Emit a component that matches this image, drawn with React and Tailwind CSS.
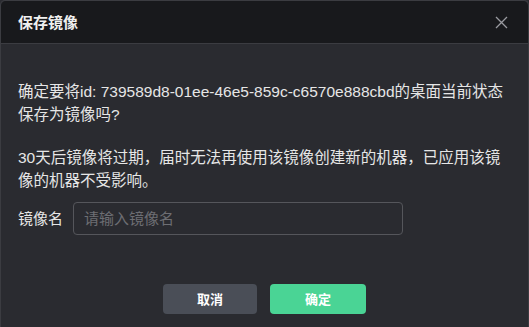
import React from "react";

export default function App() {
  const font = { fontFamily: '"Liberation Sans", Arial, "Noto Sans CJK SC", sans-serif' };
  return (
    <div className="w-[529px] h-[327px] bg-[#2a2b30] overflow-hidden" style={font}>
      <div className="w-full h-full rounded-t-[5px] border border-b-0 border-[#3b3c41] flex flex-col bg-[#2a2b30]">
        <div className="h-[43px] shrink-0 bg-[#18191c] rounded-t-[5px] border-b border-[#3b3c41] flex items-center justify-between pl-[17px] pr-[20px]">
          <span className="text-[15px] font-bold text-[#f0f0f0] leading-none">保存镜像</span>
          <svg width="13" height="13" viewBox="0 0 13 13" className="text-[#9a9ba0]">
            <path d="M1 1L12 12M12 1L1 12" stroke="currentColor" strokeWidth="1.3" fill="none" />
          </svg>
        </div>
        <div className="flex flex-col px-[17px] pt-[36px] text-[15.5px] leading-[23px] text-[#e6e6e6]">
          <p>确定要将id: 739589d8-01ee-46e5-859c-c6570e888cbd的桌面当前状态保存为镜像吗?</p>
          <p className="mt-[20px]">30天后镜像将过期，届时无法再使用该镜像创建新的机器，已应用该镜像的机器不受影响。</p>
          <div className="flex items-center mt-[10px] gap-[7px]">
            <span className="text-[15px] text-[#e6e6e6] w-[48px] whitespace-nowrap">镜像名</span>
            <div className="w-[330px] h-[33px] border border-[#55565b] rounded-[4px] flex items-center px-[10px] text-[15px] text-[#6d6e73]">
              请输入镜像名
            </div>
          </div>
          <div className="flex justify-center gap-[13px] mt-[49px]">
            <button className="w-[94px] h-[30px] rounded-[4px] bg-[#4a4e57] text-white text-[13px] font-bold">取消</button>
            <button className="w-[96px] h-[30px] rounded-[4px] bg-[#4ad495] text-white text-[13px] font-bold">确定</button>
          </div>
        </div>
      </div>
    </div>
  );
}
